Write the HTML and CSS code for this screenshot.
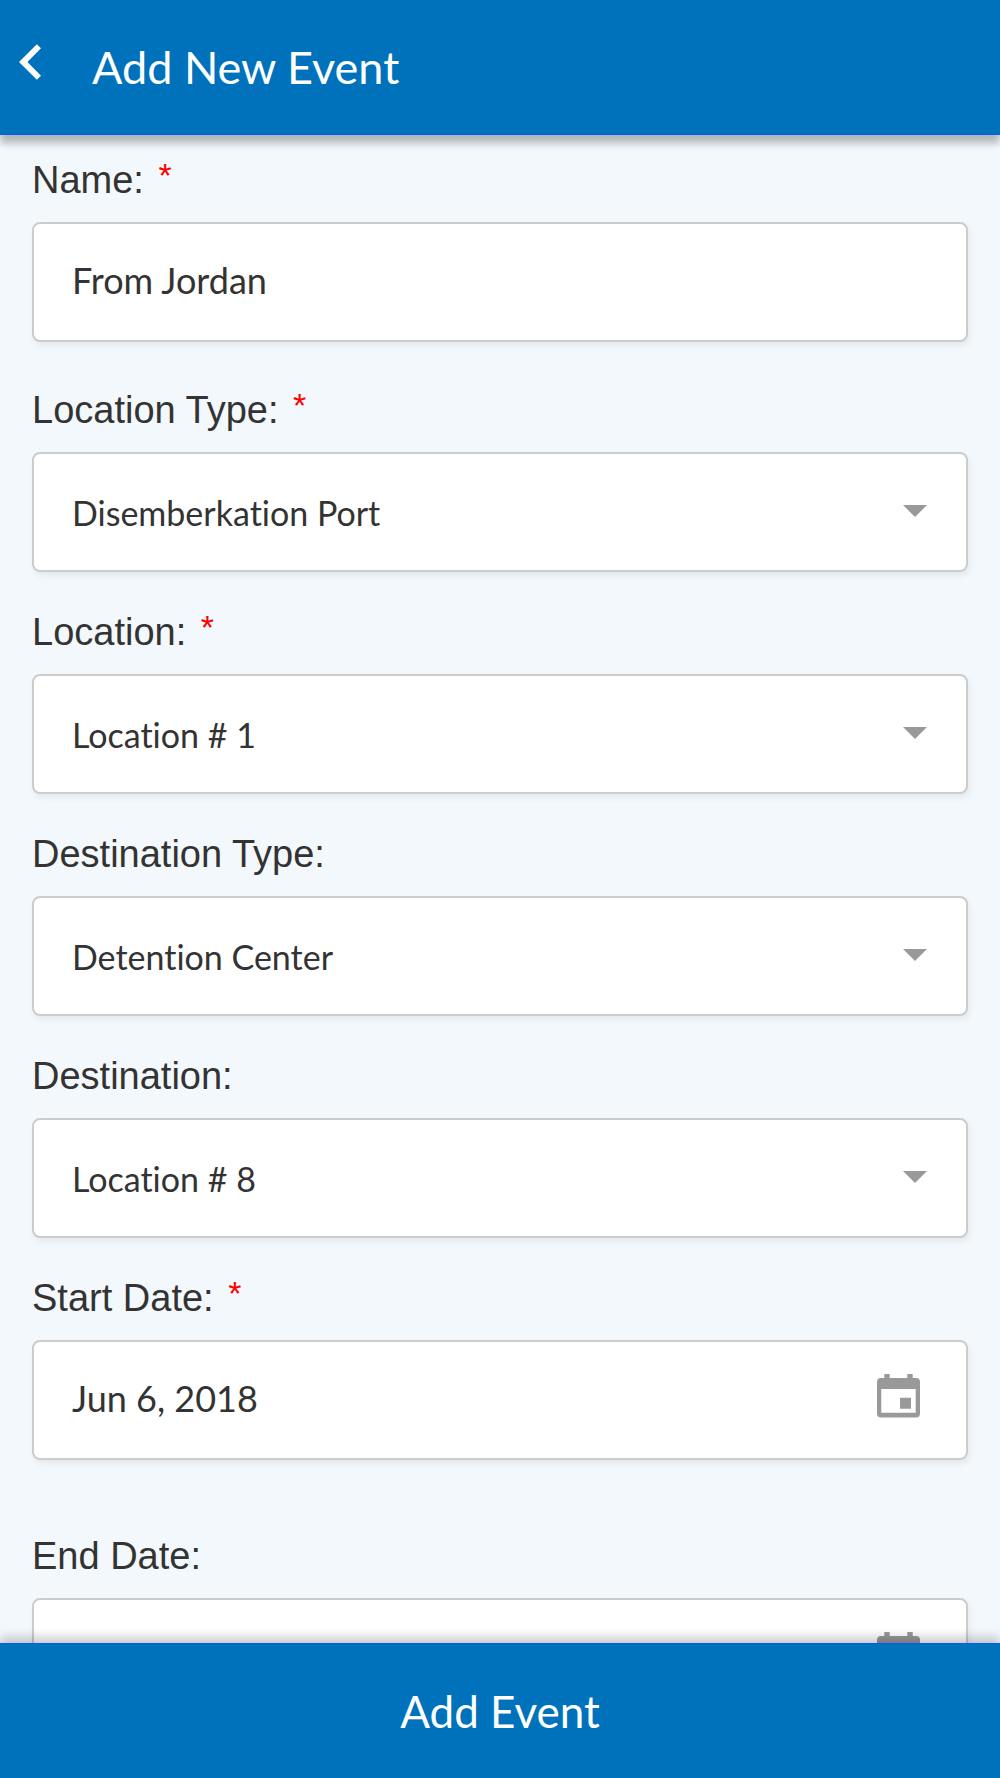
FILE: index.html
```html
<!DOCTYPE html>
<html lang="en">
<head>
  <meta charset="utf-8">
  <meta name="viewport" content="width=device-width, initial-scale=1">
  <title>Add New Event</title>
  <link rel="stylesheet" href="styles.css">
</head>
<body>
  <svg class="sprite" aria-hidden="true">
    <symbol id="icon-arrow" viewBox="0 0 24 12"><path d="M0 0h24L12 12z"/></symbol>
    <symbol id="icon-calendar" viewBox="0 0 43 44">
      <path fill-rule="evenodd" d="M7.3 0h5.4v4h17.6V0h5.4v4H39a4 4 0 0 1 4 4v31.500a4 4 0 0 1-4 4H4a4 4 0 0 1-4-4V8a4 4 0 0 1 4-4h3.300zM4.300 15v23.700h34.400V15zM23 23.700h11v11H23z"/>
    </symbol>
  </svg>
  <form class="app">
    <header class="header">
      <button class="back" type="button" aria-label="Back">
        <svg class="back-icon" viewBox="8 6 7.410 12" aria-hidden="true"><path d="M15.410 16.590 10.830 12l4.580-4.590L14 6l-6 6 6 6z"/></svg>
      </button>
      <h1 class="title">Add New Event</h1>
    </header>

    <main class="fields">
      <div class="field field-text">
        <label class="label" for="name">Name: <span class="required">*</span></label>
        <div class="control">
          <input class="input" id="name" type="text" value="From Jordan" required>
        </div>
      </div>
      <div class="field">
        <label class="label" for="location-type">Location Type: <span class="required">*</span></label>
        <div class="control">
          <select class="select" id="location-type" required><option>Disemberkation Port</option></select>
          <svg class="arrow" aria-hidden="true"><use href="#icon-arrow"/></svg>
        </div>
      </div>
      <div class="field">
        <label class="label" for="location">Location: <span class="required">*</span></label>
        <div class="control">
          <select class="select" id="location" required><option>Location # 1</option></select>
          <svg class="arrow" aria-hidden="true"><use href="#icon-arrow"/></svg>
        </div>
      </div>
      <div class="field">
        <label class="label" for="destination-type">Destination Type:</label>
        <div class="control">
          <select class="select" id="destination-type"><option>Detention Center</option></select>
          <svg class="arrow" aria-hidden="true"><use href="#icon-arrow"/></svg>
        </div>
      </div>
      <div class="field">
        <label class="label" for="destination">Destination:</label>
        <div class="control">
          <select class="select" id="destination"><option>Location # 8</option></select>
          <svg class="arrow" aria-hidden="true"><use href="#icon-arrow"/></svg>
        </div>
      </div>
      <div class="field field-date">
        <label class="label" for="start-date">Start Date: <span class="required">*</span></label>
        <div class="control">
          <input class="input" id="start-date" type="text" value="Jun 6, 2018" required>
          <button class="picker" type="button" aria-label="Choose start date"><svg class="calendar" aria-hidden="true"><use href="#icon-calendar"/></svg></button>
        </div>
      </div>
      <div class="field field-date">
        <label class="label" for="end-date">End Date:</label>
        <div class="control">
          <input class="input" id="end-date" type="text">
          <button class="picker" type="button" aria-label="Choose end date"><svg class="calendar" aria-hidden="true"><use href="#icon-calendar"/></svg></button>
        </div>
      </div>
    </main>

    <footer class="footer">
      <button class="submit" type="submit">Add Event</button>
    </footer>
  </form>
</body>
</html>
```

FILE: styles.css
```css
:root {
  --blue: #0072bc;
  --edge: #005eff;
  --text: #333;
  --icon: #999;
}

* {
  box-sizing: border-box;
}

body {
  margin: 0;
  background: #f3f8fc;
  color: var(--text);
  font-family: Lato, sans-serif;
  font-variant-ligatures: none;
}

.sprite {
  display: none;
}

.app {
  display: flex;
  flex-direction: column;
  height: 100vh;
}

.header {
  z-index: 1;
  display: flex;
  flex: none;
  align-items: center;
  gap: 51px;
  min-height: 135px;
  padding: 0 19px;
  border-bottom: 1px solid var(--edge);
  background: var(--blue);
  box-shadow: 0 8px 8px rgba(0, 0, 0, 0.28);
  color: #fff;
}

.back {
  display: flex;
  margin: 0;
  padding: 0 0 10px;
  border: 0;
  background: none;
  color: inherit;
  cursor: pointer;
}

.back-icon {
  width: 22px;
  height: 36px;
  fill: currentColor;
}

.title {
  margin: 0;
  font-size: 45px;
  font-weight: 400;
  line-height: 56px;
}

.fields {
  flex: 1;
  min-height: 0;
  padding: 23px 32px;
  overflow-y: auto;
  scrollbar-width: none;
}

.field {
  margin-bottom: 38px;
}

.field-text {
  margin-bottom: 46px;
}

.field-date {
  margin-bottom: 74px;
}

.label {
  display: block;
  margin-bottom: 20px;
  font-family: "Liberation Sans", Arial, sans-serif;
  font-size: 38px;
  line-height: 44px;
}

.required {
  margin-left: 4px;
  color: #f00;
  font-size: 34px;
  line-height: 24px;
  vertical-align: 6px;
}

.control {
  display: grid;
  align-items: center;
  border: 2px solid #ccc;
  border-radius: 8px;
  background: #fff;
  box-shadow: 2px 4px 6px rgba(0, 0, 0, 0.06);
}

.control > * {
  grid-area: 1 / 1;
}

.input,
.select {
  width: 100%;
  height: 116px;
  margin: 0;
  padding: 0 38px;
  border: 0;
  border-radius: 6px;
  outline: 0;
  background: none;
  color: inherit;
  font-family: inherit;
  font-variant-ligatures: inherit;
  appearance: none;
}

.input {
  padding-bottom: 4px;
  font-size: 36px;
}

.select {
  font-size: 34px;
}

.arrow {
  justify-self: end;
  width: 24px;
  height: 12px;
  margin: 0 39px 2px 0;
  fill: var(--icon);
  pointer-events: none;
}

.picker {
  display: flex;
  justify-self: end;
  margin: 0 46px 8px 0;
  padding: 0;
  border: 0;
  background: none;
  cursor: pointer;
}

.calendar {
  width: 43px;
  height: 44px;
  fill: var(--icon);
}

.footer {
  z-index: 1;
  flex: none;
  border-top: 1px solid var(--edge);
  background: var(--blue);
  box-shadow: 0 -6px 10px rgba(0, 0, 0, 0.2);
}

.submit {
  width: 100%;
  min-height: 134px;
  margin: 0;
  padding: 0;
  border: 0;
  background: none;
  color: #fff;
  font-family: inherit;
  font-size: 44px;
  cursor: pointer;
}
```
